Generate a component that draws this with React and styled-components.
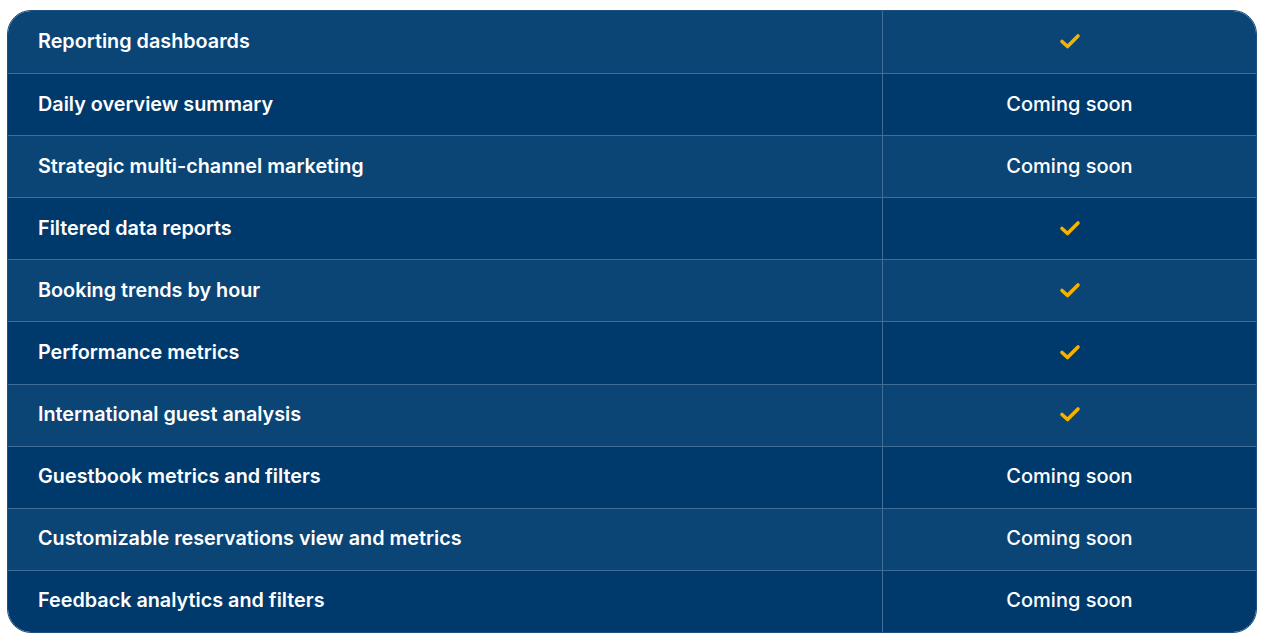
import React from 'react'
import styled, { createGlobalStyle } from 'styled-components'

const GlobalStyle = createGlobalStyle`
  body {
    margin: 0;
    background: #ffffff;
    font-family: Inter, "Noto Sans", sans-serif;
  }
`;

const Page = styled.div`
  padding: 10px 5px 8px 7px;
`;

const Table = styled.div`
  width: 1250px;
  border-radius: 24px;
  overflow: hidden;
  display: grid;
  grid-template-columns: 875px 1fr;
  border: 1px solid #1d4f80;
  box-sizing: border-box;
`;

const Cell = styled.div`
  height: 62.1px;
  box-sizing: border-box;
  display: flex;
  align-items: center;
  background: ${p => (p.$odd ? '#0b4576' : '#003a6c')};
  border-top: ${p => (p.$first ? 'none' : '1px solid #416d96')};
  color: #ffffff;
  font-family: Inter, sans-serif;
  font-size: 19.8px;
  font-weight: 600;
  padding-bottom: 2px;
`;

const Feature = styled(Cell)`
  padding-left: 30px;
  border-right: 1px solid #416d96;
`;

const Status = styled(Cell)`
  justify-content: center;
  font-size: 20px;
  font-weight: 500;
`;

const Check = () => (
  <svg width="22" height="16" viewBox="0 0 22 16" fill="none">
    <path d="M3 8.5 L8.5 13.5 L19 3" stroke="#f5b301" strokeWidth="3.6" strokeLinecap="round" strokeLinejoin="round" />
  </svg>
);

const rows = [
  ['Reporting dashboards', true],
  ['Daily overview summary', false],
  ['Strategic multi-channel marketing', false],
  ['Filtered data reports', true],
  ['Booking trends by hour', true],
  ['Performance metrics', true],
  ['International guest analysis', true],
  ['Guestbook metrics and filters', false],
  ['Customizable reservations view and metrics', false],
  ['Feedback analytics and filters', false],
];

export default function App() {
  return (
    <>
      <GlobalStyle />
      <Page>
        <Table>
          {rows.map(([name, ready], i) => (
            <React.Fragment key={name}>
              <Feature $odd={i % 2 === 0} $first={i === 0}>{name}</Feature>
              <Status $odd={i % 2 === 0} $first={i === 0}>
                {ready ? <Check /> : 'Coming soon'}
              </Status>
            </React.Fragment>
          ))}
        </Table>
      </Page>
    </>
  )
}
